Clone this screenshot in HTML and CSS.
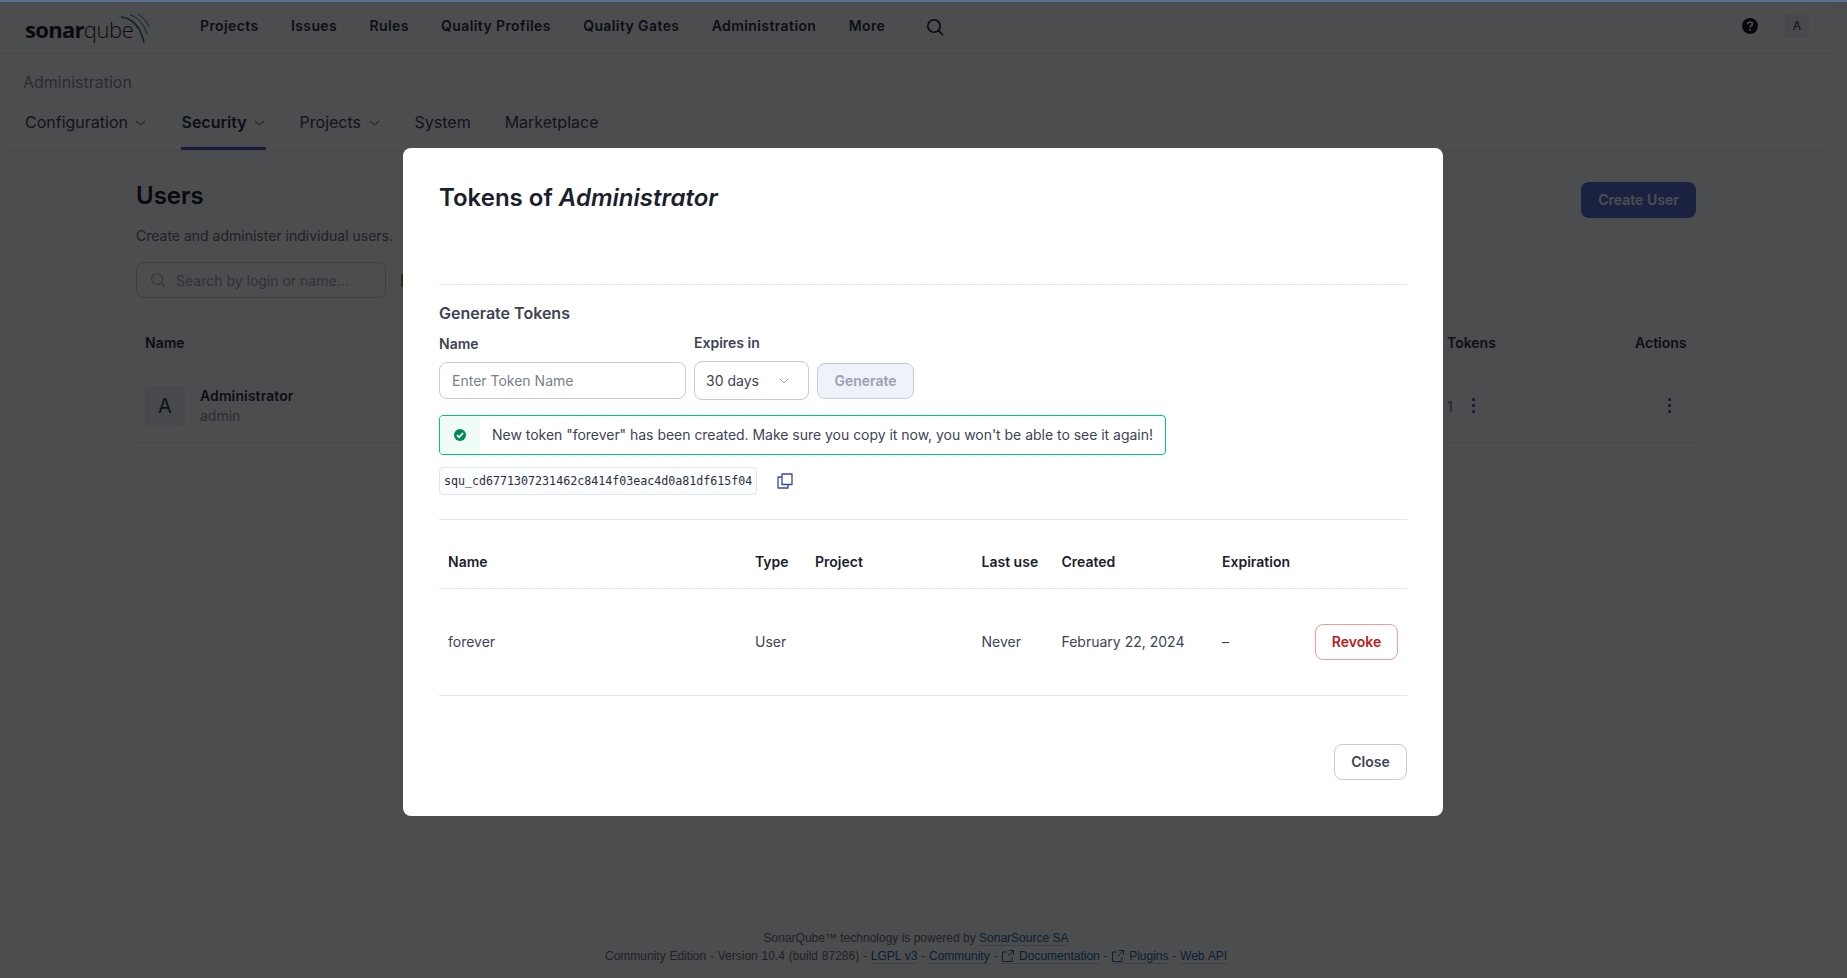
FILE: index.html
```html
<!DOCTYPE html>
<html lang="en">
<head>
  <meta charset="UTF-8" />
  <title>Users - Administration - SonarQube</title>
  <link rel="stylesheet" href="styles.css">
</head>
<body>
  <div class="top-line"></div>
  <div class="page">
    <div class="page-main">
      <header class="global-nav">
        <a class="logo">
          <span class="logo-text"><b>sonar</b>qube</span>
          <svg class="logo-arcs" width="30" height="32" viewBox="0 0 30 32" fill="none" stroke="#2f6f94">
            <path d="M1 4 C12 5 21 14 24 30" stroke-width="1.5"/>
            <path d="M10 2 C18 4 24 11 27 21" stroke-width="1"/>
            <path d="M18 1 C23 4 27 9 29 14" stroke-width="1"/>
          </svg>
        </a>
        <nav class="global-links">
          <a>Projects</a>
          <a>Issues</a>
          <a>Rules</a>
          <a>Quality Profiles</a>
          <a>Quality Gates</a>
          <a>Administration</a>
          <a>More</a>
        </nav>
        <svg class="search-icon" width="18" height="18" viewBox="0 0 18 18" fill="none" stroke="#1b1e2d" stroke-width="1.6">
          <circle cx="8" cy="8" r="6.2"/>
          <path d="M12.6 12.6 L17 17"/>
        </svg>
        <div class="global-right">
          <svg class="help-icon" width="16" height="16" viewBox="0 0 16 16">
            <circle cx="8" cy="8" r="8" fill="#151824"/>
            <path d="M5.6 6.2 C5.7 3.4 10.4 3.4 10.4 6 C10.4 7.8 8 7.7 8 9.6" fill="none" stroke="#fff" stroke-width="1.7"/>
            <circle cx="8" cy="12" r="1.1" fill="#fff"/>
          </svg>
          <span class="avatar-small">A</span>
        </div>
      </header>

      <section class="admin-nav">
        <div class="admin-title">Administration</div>
        <nav class="admin-tabs">
          <a>Configuration <svg class="chev" width="11" height="6" viewBox="0 0 11 6"><path d="M1 1 L5.5 5 L10 1"/></svg></a>
          <a class="active">Security <svg class="chev" width="11" height="6" viewBox="0 0 11 6"><path d="M1 1 L5.5 5 L10 1"/></svg></a>
          <a>Projects <svg class="chev" width="11" height="6" viewBox="0 0 11 6"><path d="M1 1 L5.5 5 L10 1"/></svg></a>
          <a>System</a>
          <a>Marketplace</a>
        </nav>
      </section>

      <main class="content">
        <div class="users-head">
          <div>
            <h1>Users</h1>
            <p>Create and administer individual users.</p>
          </div>
          <button class="btn-create">Create User</button>
        </div>
        <div class="users-filters">
          <div class="user-search">
            <svg width="16" height="16" viewBox="0 0 16 16" fill="none" stroke="#b4b8c4" stroke-width="1.2">
              <circle cx="7" cy="7" r="5.5"/>
              <path d="M11 11 L15 15"/>
            </svg>
            <span>Search by login or name...</span>
          </div>
          <span class="filter-mark"></span>
        </div>
        <div class="users-row users-header">
          <span class="cell-name">Name</span>
          <span class="cell-tokens">Tokens</span>
          <span class="cell-actions">Actions</span>
        </div>
        <div class="users-row users-body">
          <span class="avatar-large">A</span>
          <span class="user-names"><b>Administrator</b><small>admin</small></span>
          <span class="cell-tokens">1 <i class="dots"></i></span>
          <span class="cell-actions"><i class="dots"></i></span>
        </div>
      </main>

      <footer class="page-footer">
        <div>SonarQube™ technology is powered by <a>SonarSource SA</a></div>
        <div>Community Edition - Version 10.4 (build 87286) - <a>LGPL v3</a> - <a>Community</a> - <a><svg class="ext" width="14" height="14" viewBox="0 0 14 14"><path d="M6 3 H1.5 V12.5 H11 V8 M7 7 L12.5 1.5 M8 1.5 H12.5 V6"/></svg> Documentation</a> - <a><svg class="ext" width="14" height="14" viewBox="0 0 14 14"><path d="M6 3 H1.5 V12.5 H11 V8 M7 7 L12.5 1.5 M8 1.5 H12.5 V6"/></svg> Plugins</a> - <a>Web API</a></div>
      </footer>
    </div>
    <div class="scroll-strip"></div>
  </div>

  <div class="overlay">
    <div class="modal">
      <h2>Tokens of <em>Administrator</em></h2>
      <hr class="rule-title">
      <h3>Generate Tokens</h3>
      <div class="token-form">
        <label class="field field-name">
          <span class="field-label">Name</span>
          <span class="token-input">Enter Token Name</span>
        </label>
        <label class="field field-expiry">
          <span class="field-label">Expires in</span>
          <span class="token-select">30 days <svg width="10" height="6" viewBox="0 0 10 6" fill="none" stroke="#9aa0ae"><path d="M1 1 L5 5 L9 1"/></svg></span>
        </label>
        <button class="btn-generate">Generate</button>
      </div>
      <div class="alert-success">
        <span class="alert-icon">
          <svg width="12" height="12" viewBox="0 0 12 12">
            <circle cx="6" cy="6" r="6" fill="#008a5a"/>
            <path d="M3 6.2 L5.2 8.3 L9 4" fill="none" stroke="#fff" stroke-width="1.8"/>
          </svg>
        </span>
        <span class="alert-text">New token "forever" has been created. Make sure you copy it now, you won't be able to see it again!</span>
      </div>
      <div class="token-value">
        <code>squ_cd6771307231462c8414f03eac4d0a81df615f04</code>
        <svg class="copy-icon" width="16" height="16" viewBox="0 0 16 16" fill="none" stroke="#3a45a8" stroke-width="1.3">
          <path d="M5 1 H15 V11.5 H5 Z" stroke-linejoin="round"/>
          <path d="M5 4 H1 V15 H11 V11.5" stroke-linejoin="round"/>
        </svg>
      </div>
      <hr class="rule-form">
      <table class="tokens-table">
        <colgroup>
          <col class="col-name"><col class="col-type"><col class="col-project"><col class="col-last"><col class="col-created"><col class="col-exp"><col class="col-action">
        </colgroup>
        <thead>
          <tr><th>Name</th><th>Type</th><th>Project</th><th>Last use</th><th>Created</th><th>Expiration</th><th></th></tr>
        </thead>
        <tbody>
          <tr>
            <td>forever</td><td>User</td><td></td><td>Never</td><td>February 22, 2024</td><td>–</td>
            <td class="cell-revoke"><button class="btn-revoke">Revoke</button></td>
          </tr>
        </tbody>
      </table>
      <div class="modal-foot">
        <button class="btn-close">Close</button>
      </div>
    </div>
  </div>
</body>
</html>
```

FILE: styles.css
```css
* {
  box-sizing: border-box;
}

body {
  margin: 0;
  height: 978px;
  overflow: hidden;
  font-family: Inter, "Noto Sans", sans-serif;
  font-size: 14px;
  color: #2a2f40;
  background: #fff;
}

button {
  padding: 0 0 1px;
}

.top-line {
  position: absolute;
  top: 0;
  left: 0;
  right: 0;
  height: 2px;
  background: #5d6f94;
  z-index: 20;
}

.page {
  display: flex;
  height: 100%;
}

.page-main {
  flex: 1;
  display: flex;
  flex-direction: column;
  min-width: 0;
}

.scroll-strip {
  width: 15px;
  background: #fbfbfb;
}

/* global nav */
.global-nav {
  display: flex;
  align-items: center;
  height: 54px;
  padding: 0 23px 2px 25px;
  border-bottom: 1px solid #eceef1;
}

.logo {
  display: flex;
  align-items: flex-start;
  width: 175px;
  position: relative;
  height: 40px;
}

.logo-text {
  font-family: "Open Sans", sans-serif;
  font-size: 22px;
  line-height: 30px;
  margin-top: 8px;
  letter-spacing: -0.4px;
  color: #1b1e2d;
  font-weight: 300;
}

.logo-text b {
  font-weight: 700;
  letter-spacing: -0.7px;
}

.logo-arcs {
  position: absolute;
  left: 95px;
  top: 7px;
}

.global-links {
  display: flex;
  gap: 32.3px;
  font-weight: 600;
  letter-spacing: 0.4px;
  color: #2a2f40;
}

.search-icon {
  margin: 3px 0 0 41px;
}

.global-right {
  margin-left: auto;
  display: flex;
  align-items: center;
  gap: 27px;
}

.avatar-small {
  width: 24px;
  height: 24px;
  border-radius: 3px;
  background: #eff2f9;
  text-align: center;
  line-height: 24px;
  font-size: 12px;
  color: #1d3b52;
}

/* admin nav */
.admin-nav {
  height: 96px;
  padding: 18px 24px 0 23px;
  box-shadow: 0 2px 6px rgba(0, 0, 0, 0.06);
}

.admin-title {
  font-size: 16px;
  line-height: 20px;
  color: #8a8fa0;
}

.admin-tabs {
  display: flex;
  gap: 34px;
  margin: 13px 0 0 2px;
  font-size: 16px;
  color: #3e4355;
}

.admin-tabs a {
  padding: 7px 0 15px;
  line-height: 20px;
  height: 45px;
}

.admin-tabs .active {
  font-weight: 600;
  color: #2a2f40;
  border-bottom: 3px solid #4d58c6;
}

.chev {
  margin: 0 1px 0 3px;
  vertical-align: 2px;
  fill: none;
  stroke: #3e4355;
}

/* users page behind the modal */
.content {
  flex: 1;
  padding: 30px 136px 0 136px;
}

.users-head {
  display: flex;
  justify-content: space-between;
  align-items: flex-start;
}

.users-head h1 {
  margin: 0;
  font-size: 24px;
  line-height: 32px;
  font-weight: 600;
  color: #1b1e2d;
}

.users-head p {
  margin: 14px 0 0;
  line-height: 20px;
  color: #6a6e7a;
}

.btn-create {
  margin-top: 2px;
  width: 115px;
  height: 36px;
  border: 0;
  border-radius: 8px;
  background: #5d6cd0;
  color: #fff;
  font: 600 14px Inter, sans-serif;
}

.users-filters {
  display: flex;
  align-items: center;
  gap: 15px;
  margin-top: 16px;
}

.user-search {
  display: flex;
  align-items: center;
  gap: 10px;
  width: 250px;
  height: 36px;
  padding-left: 13px;
  border: 1px solid #c5cbdc;
  border-radius: 8px;
  color: #a0a4b0;
}

.filter-mark {
  width: 2px;
  height: 13px;
  background: #c8822c;
}

.users-row {
  display: flex;
  align-items: center;
  padding: 0 10px 0 9px;
  border-bottom: 1px solid #eceef1;
}

.users-header {
  height: 54px;
  margin-top: 18px;
  padding-bottom: 1px;
  border-top: 1px solid #eceef1;
  font-weight: 600;
  color: #2a2f40;
}

.users-body {
  height: 73px;
}

.cell-name {
  margin-right: auto;
}

.cell-tokens {
  width: 188px;
}

.users-body .cell-tokens {
  margin-left: auto;
  color: #6a6e7a;
}

.cell-actions {
  width: 51px;
  text-align: right;
}

.avatar-large {
  width: 40px;
  height: 40px;
  margin-right: 15px;
  border-radius: 4px;
  background: #eff2f9;
  text-align: center;
  line-height: 40px;
  font-size: 20px;
  color: #1d3b52;
}

.user-names {
  display: flex;
  flex-direction: column;
  line-height: 20px;
}

.user-names b {
  font-weight: 600;
  letter-spacing: 0.1px;
  color: #2a2f40;
}

.user-names small {
  font-size: 14px;
  color: #8f94a3;
}

.dots {
  display: inline-block;
  width: 3px;
  height: 3px;
  margin: 0 17px 5px 15px;
  border-radius: 50%;
  background: #3a45a8;
  box-shadow: 0 -6px 0 #3a45a8, 0 6px 0 #3a45a8;
}

.cell-actions .dots {
  margin: 0 15px 5px 0;
}

.page-footer {
  height: 60px;
  padding-top: 10px;
  border-top: 1px solid #eceef1;
  font-family: "Liberation Sans", Arial, sans-serif;
  font-size: 12px;
  line-height: 18px;
  text-align: center;
  color: #6a6e7a;
}

.page-footer div + div {
  word-spacing: 0.45px;
}

.page-footer a {
  color: #236a97;
  border-bottom: 1px solid #cfd3e0;
}

.ext {
  vertical-align: -3px;
  fill: none;
  stroke: #236a97;
}

/* modal */
.overlay {
  position: fixed;
  inset: 0;
  z-index: 10;
  display: flex;
  justify-content: center;
  align-items: flex-start;
  padding: 148px 1px 0 0;
  background: rgba(0, 1, 4, 0.7);
}

.modal {
  width: 1040px;
  height: 668px;
  padding: 33px 36px 0;
  border-radius: 8px;
  background: #fff;
  color: #2a2f40;
}

.modal h2 {
  margin: 0;
  font-size: 24px;
  line-height: 34px;
  font-weight: 600;
  color: #1b1e2d;
}

.modal hr {
  margin: 0;
  border: 0;
  border-top: 1px solid #e1e6f3;
}

.modal .rule-title {
  margin-top: 69px;
}

.modal h3 {
  margin: 18px 0 0;
  font-size: 16px;
  line-height: 20px;
  font-weight: 600;
  color: #3e4355;
}

.token-form {
  display: flex;
  align-items: flex-end;
  gap: 8px;
  margin-top: 10px;
}

.field {
  display: flex;
  flex-direction: column;
}

.field-label {
  font-weight: 600;
  line-height: 20px;
  color: #3e4355;
}

.field-name {
  margin-bottom: 1px;
}

.field-name .field-label {
  margin-bottom: 8px;
}

.field-expiry .field-label {
  margin-bottom: 8px;
}

.token-input {
  display: flex;
  align-items: center;
  width: 247px;
  height: 37px;
  padding-left: 12px;
  border: 1px solid #c5cbdc;
  border-radius: 8px;
  color: #7a7f8c;
}

.token-select {
  display: flex;
  align-items: center;
  justify-content: space-between;
  width: 115px;
  height: 39px;
  padding: 0 19px 0 11px;
  border: 1px solid #c5cbdc;
  border-radius: 8px;
  color: #3e4355;
}

.btn-generate {
  width: 97px;
  height: 36px;
  margin-bottom: 1px;
  border: 1px solid #c5cbdc;
  border-radius: 8px;
  background: #eff2f9;
  color: #9aa0b2;
  font: 600 14px Inter, sans-serif;
}

.alert-success {
  display: flex;
  width: 727px;
  height: 40px;
  margin-top: 15px;
  border: 1px solid #00c583;
  border-radius: 4px;
  overflow: hidden;
}

.alert-icon {
  display: flex;
  align-items: center;
  justify-content: center;
  width: 40px;
  background: #f0fdf6;
}

.alert-text {
  flex: 1;
  padding-left: 12px;
  line-height: 38px;
  letter-spacing: -0.025px;
  white-space: nowrap;
  color: #3e4355;
}

.token-value {
  display: flex;
  align-items: center;
  gap: 20px;
  margin-top: 12px;
}

.token-value code {
  width: 318px;
  height: 28px;
  padding-left: 4px;
  border: 1px solid #e1e6f3;
  border-radius: 4px;
  background: #fbfcfd;
  font-family: "DejaVu Sans Mono", monospace;
  font-size: 11.65px;
  line-height: 26px;
  white-space: nowrap;
  color: #2a2f40;
}

.modal .rule-form {
  margin-top: 24px;
}

.tokens-table {
  width: 968px;
  margin-top: 18px;
  table-layout: fixed;
  border-collapse: separate;
  border-spacing: 0;
}

.col-name { width: 307px; }
.col-type { width: 60px; }
.col-project { width: 166.5px; }
.col-last { width: 80px; }
.col-created { width: 160.5px; }
.col-exp { width: 95px; }
.col-action { width: 99px; }

.tokens-table th {
  height: 51px;
  padding: 0 8px 3px 9px;
  text-align: left;
  font-weight: 600;
  color: #1b1e2d;
  border-bottom: 1px solid #e1e6f3;
}

.tokens-table td {
  height: 107px;
  padding: 0 8px 2px 9px;
  color: #3e4355;
  border-bottom: 1px solid #e1e6f3;
}

.tokens-table .cell-revoke {
  padding: 0 9px 0 0;
  text-align: right;
}

.btn-revoke {
  width: 83px;
  height: 36px;
  border: 1px solid #f79a94;
  border-radius: 8px;
  background: #fff;
  color: #b91c1c;
  font: 600 14px Inter, sans-serif;
}

.modal-foot {
  display: flex;
  justify-content: flex-end;
  margin-top: 48px;
}

.btn-close {
  width: 73px;
  height: 36px;
  border: 1px solid #c5cbdc;
  border-radius: 8px;
  background: #fff;
  color: #3e4355;
  font: 600 14px Inter, sans-serif;
}
```
